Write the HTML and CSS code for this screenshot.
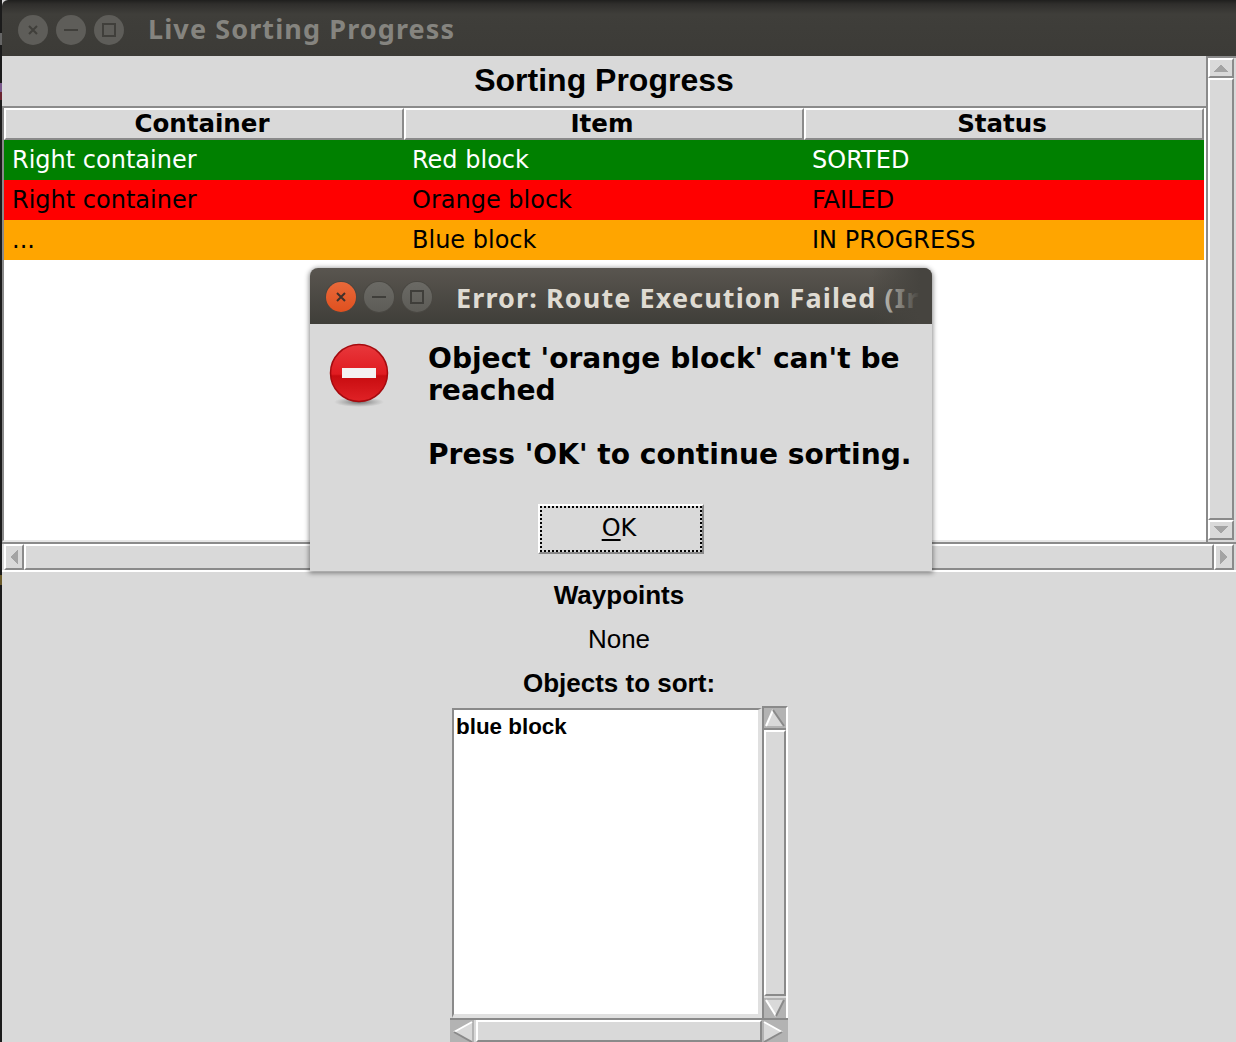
FILE: index.html
```
<!DOCTYPE html>
<html lang="en">
<head>
<meta charset="utf-8">
<title>Live Sorting Progress</title>
<link rel="stylesheet" href="styles.css">
</head>
<body>
<div class="window">
  <header class="titlebar">
    <span class="ctl ctl-faded"><svg viewBox="0 0 30 30"><path d="M11 11l8 8M19 11l-8 8"/></svg></span>
    <span class="ctl ctl-faded"><svg viewBox="0 0 30 30"><path d="M8 15h14"/></svg></span>
    <span class="ctl ctl-faded"><svg viewBox="0 0 30 30"><rect x="9" y="9" width="12" height="12"/></svg></span>
    <span class="wintitle wintitle-faded">Live Sorting Progress</span>
  </header>
  <section class="top">
    <div class="tablearea">
      <h1 class="heading">Sorting Progress</h1>
      <div class="tree">
        <div class="row">
          <div class="th">Container</div><div class="th">Item</div><div class="th">Status</div>
        </div>
        <div class="row row-green"><div class="td">Right container</div><div class="td">Red block</div><div class="td">SORTED</div></div>
        <div class="row row-red"><div class="td">Right container</div><div class="td">Orange block</div><div class="td">FAILED</div></div>
        <div class="row row-orange"><div class="td">...</div><div class="td">Blue block</div><div class="td">IN PROGRESS</div></div>
      </div>
    </div>
    <div class="vbar">
      <div class="raised btn-v"><svg class="arrow" width="14" height="8" viewBox="0 0 14 8"><polygon points="7,0 14,8 0,8"/></svg></div>
      <div class="raised thumb"></div>
      <div class="raised btn-v"><svg class="arrow" width="14" height="8" viewBox="0 0 14 8"><polygon points="0,0 14,0 7,8"/></svg></div>
    </div>
  </section>
  <div class="hbar">
    <div class="raised btn-h"><svg class="arrow" width="8" height="14" viewBox="0 0 8 14"><polygon points="8,0 8,14 0,7"/></svg></div>
    <div class="raised thumb"></div>
    <div class="raised btn-h"><svg class="arrow" width="8" height="14" viewBox="0 0 8 14"><polygon points="0,0 8,7 0,14"/></svg></div>
  </div>
  <section class="lower">
    <div class="label label-bold">Waypoints</div>
    <div class="label">None</div>
    <div class="label label-bold">Objects to sort:</div>
    <div class="listgroup">
      <div class="listbox">blue block</div>
      <div class="lvbar">
        <div class="lbtn lbtn-v"><svg width="22" height="20" viewBox="0 0 22 20"><polygon class="tri" points="9,2 20,18 2,18"/><path class="lit" d="M9 2L2 18"/><path class="shade" d="M9 2L20 18"/></svg></div>
        <div class="raised lthumb"></div>
        <div class="lbtn lbtn-v"><svg width="22" height="20" viewBox="0 0 22 20"><polygon class="tri" points="2,2 20,2 12,18"/><path class="lit" d="M2 2L12 18"/><path class="shade" d="M20 2L12 18"/></svg></div>
      </div>
      <div class="lhbar">
        <div class="lbtn lbtn-h"><svg width="24" height="22" viewBox="0 0 24 22"><polygon class="tri" points="4,12 22,2 22,22"/><path class="lit" d="M4 12L22 2"/><path class="shade" d="M4 12L22 22"/></svg></div>
        <div class="raised lhthumb"></div>
      </div>
      <div class="lbtn lbtn-corner"><svg width="24" height="22" viewBox="0 0 24 22"><polygon class="tri" points="2,2 20,12 2,22"/><path class="lit" d="M2 2L20 12"/><path class="shade" d="M20 12L2 22"/></svg></div>
    </div>
  </section>
</div>

<div class="dialog">
  <header class="dlgbar">
    <span class="ctl ctl-close"><svg viewBox="0 0 30 30"><path d="M11 11l8 8M19 11l-8 8"/></svg></span>
    <span class="ctl ctl-dlg"><svg viewBox="0 0 30 30"><path d="M8 15h14"/></svg></span>
    <span class="ctl ctl-dlg"><svg viewBox="0 0 30 30"><rect x="9" y="9" width="12" height="12"/></svg></span>
    <span class="wintitle wintitle-dlg">Error: Route Execution Failed (Ir</span>
  </header>
  <div class="dlgbody">
    <div class="dlgmain">
      <svg class="erricon" width="64" height="68" viewBox="0 0 64 68">
        <defs>
          <linearGradient id="redfill" x1="0" y1="0" x2="0" y2="1">
            <stop offset="0" stop-color="#e8383c"/>
            <stop offset="0.52" stop-color="#e01b20"/>
            <stop offset="0.55" stop-color="#c80c10"/>
            <stop offset="1" stop-color="#e02226"/>
          </linearGradient>
          <radialGradient id="iconshadow">
            <stop offset="0" stop-color="#555" stop-opacity="0.8"/>
            <stop offset="1" stop-color="#777" stop-opacity="0"/>
          </radialGradient>
        </defs>
        <ellipse cx="31" cy="60" rx="25" ry="5" fill="url(#iconshadow)"/>
        <circle cx="31" cy="31" r="28.5" fill="url(#redfill)" stroke="#a50a0e" stroke-width="1.5"/>
        <rect x="14" y="26" width="34" height="10" fill="#f4f2f2"/>
      </svg>
      <p class="message">Object 'orange block' can't be reached

Press 'OK' to continue sorting.</p>
    </div>
    <div class="btnrow"><button class="okbtn" type="button"><span class="focus"><span class="ul">O</span>K</span></button></div>
  </div>
</div>
</body>
</html>
```
FILE: styles.css
```
* { box-sizing: border-box; }
html, body { margin: 0; padding: 0; height: 100%; overflow: hidden; }
body {
  background: linear-gradient(#1b1b1b 0 33px, #666 33px 45px, #1b1b1b 45px 83px, #7a5a8c 83px 92px, #6a2530 92px 100px, #1b1b1b 100px 575px, #6a5a2a 575px 585px, #1b1b1b 585px);
  position: relative;
  font-family: "DejaVu Sans", sans-serif;
}
svg { display: block; }

.window { margin-left: 2px; height: 1042px; background: #d9d9d9; display: flex; flex-direction: column; }

.titlebar {
  height: 56px; flex: none; display: flex; align-items: center; padding: 4px 0 0 16px; gap: 8px;
  background: linear-gradient(#1f1f1e 0, #2f2e2c 4px, #3f3e3a 14px, #3c3b37 100%);
  border-top-left-radius: 6px;
}
.dlgbar {
  height: 56px; flex: none; display: flex; align-items: center; padding: 2px 0 0 16px; gap: 8px;
  background: linear-gradient(#59554f, #3f3e39);
  border-radius: 8px 8px 0 0; overflow: hidden; position: relative;
}
.dlgbar::after {
  content: ""; position: absolute; right: 0; top: 0; bottom: 0; width: 60px;
  background: linear-gradient(90deg, rgba(70,68,63,0), #46443f 80%);
}
.ctl { width: 30px; height: 30px; border-radius: 50%; flex: none; }
.ctl svg { width: 30px; height: 30px; fill: none; stroke-width: 2; }
.ctl-faded { background: #5e5d59; }
.ctl-faded svg { stroke: #403f3b; }
.ctl-close { background: linear-gradient(#e8693a, #e0501f); box-shadow: 0 0 0 1px #4a4640; }
.ctl-close svg { stroke: #40302a; }
.ctl-dlg { background: linear-gradient(#6b6a65, #5d5c57); box-shadow: 0 0 0 1px #4a4843; }
.ctl-dlg svg { stroke: #3f3e3a; }

.wintitle { font-family: "Noto Sans", sans-serif; font-weight: 700; font-size: 27px; letter-spacing: 1.1px; margin-left: 16px; white-space: nowrap; }
.wintitle-faded { color: #85847f; padding-bottom: 4px; }
.wintitle-dlg { color: #dfdbd2; }

.top { height: 486px; flex: none; display: flex; }
.tablearea { width: 1204px; flex: none; display: flex; flex-direction: column; }
.heading { margin: 0; height: 50px; flex: none; display: flex; align-items: center; justify-content: center; font-family: "Liberation Sans", sans-serif; font-weight: 700; font-size: 32px; color: #000; padding-bottom: 1px; }
.tree { flex: 1; background: #fff; border: 2px solid #8a8a8a; border-bottom-color: #e6e6e6; border-right: 0; padding-right: 2px; }
.row { display: grid; grid-template-columns: repeat(3, 400px); }
.th { height: 32px; background: #d9d9d9; border: 2px solid; border-color: #fff #8a8a8a #8a8a8a #fff; display: flex; align-items: center; justify-content: center; font-weight: 700; font-size: 24.5px; color: #000; padding: 0 4px 2px 0; }
.td { height: 40px; display: flex; align-items: center; padding: 0 0 1px 8px; font-size: 24px; }
.row-green { background: #008000; color: #fff; }
.row-red { background: #ff0000; color: #000; }
.row-orange { background: #ffa500; color: #000; }

.raised { background: #d9d9d9; border: 2px solid; border-color: #fff #8a8a8a #8a8a8a #fff; }
.arrow { fill: #a4a4a4; shape-rendering: crispEdges; }

.vbar { flex: 1; display: flex; flex-direction: column; border-left: 2px solid #8a8a8a; border-top: 2px solid #8a8a8a; padding-right: 2px; }
.btn-v { height: 20px; flex: none; display: flex; align-items: center; justify-content: center; }
.vbar .thumb { flex: none; height: 442px; }

.hbar { height: 30px; flex: none; display: flex; border-top: 2px solid #8a8a8a; border-bottom: 2px solid #fff; padding: 0 2px; }
.btn-h { width: 20px; flex: none; display: flex; align-items: center; justify-content: center; }
.hbar .thumb { flex: 1; }

.lower { flex: 1; display: flex; flex-direction: column; align-items: center; padding-top: 1px; min-height: 0; }
.label { height: 44px; flex: none; display: flex; align-items: center; font-family: "Liberation Sans", sans-serif; font-size: 26px; color: #000; }
.label-bold { font-weight: 700; }

.listgroup { width: 338px; margin-top: 1px; display: grid; grid-template-columns: 312px 26px; grid-template-rows: 312px 24px; flex: none; }
.listbox { margin: 2px 0 0 2px; background: #fff; border-style: solid; border-width: 2px 4px 4px 2px; border-color: #8a8a8a #e0e0e0 #e0e0e0 #8a8a8a; font-family: "Liberation Sans", sans-serif; font-weight: 700; font-size: 22.4px; padding: 2px 0 0 2px; line-height: 30px; color: #000; }
.lvbar { border-top: 2px solid #8a8a8a; border-left: 2px solid #8a8a8a; border-right: 2px solid #fff; display: flex; flex-direction: column; }
.lthumb { flex: 1; margin-top: 2px; margin-bottom: 2px; border-top-color: #fff; }
.lbtn { background: #b3b3b3; flex: none; }
.lbtn-v { height: 20px; border-bottom: 0; }
.lvbar .lbtn-v:first-child { box-shadow: 0 2px 0 #8a8a8a; }
.lhbar { border-top: 2px solid #8a8a8a; display: flex; }
.lbtn-h { width: 24px; height: 22px; }
.lhthumb { flex: 1; margin-left: 2px; height: 22px; }
.lbtn-corner { border-top: 2px solid #8a8a8a; height: 24px; }
.tri { fill: #d9d9d9; }
.lit { stroke: #fff; stroke-width: 2; fill: none; }
.shade { stroke: #8a8a8a; stroke-width: 2; fill: none; }

.dialog { position: absolute; left: 310px; top: 268px; width: 622px; height: 303px; background: #d9d9d9; border-radius: 8px 8px 0 0; box-shadow: 0 1px 5px 1px rgba(0,0,0,0.45); display: flex; flex-direction: column; }
.dlgbody { flex: 1; display: flex; flex-direction: column; }
.dlgmain { display: flex; align-items: flex-start; padding: 19px 0 0 18px; }
.erricon { margin-top: -1px; flex: none; }
.message { margin: 0 0 0 36px; white-space: pre-line; font-weight: 700; font-size: 28.1px; line-height: 32px; color: #000; }
.btnrow { display: flex; justify-content: center; margin-top: 33px; }
.okbtn { width: 166px; height: 50px; padding: 0; background: #d9d9d9; border: 2px solid; border-color: #fff #8a8a8a #8a8a8a #fff; font-family: "DejaVu Sans", sans-serif; font-size: 24px; color: #000; display: block; }
.focus {
  display: flex; width: 100%; height: 100%; align-items: center; justify-content: center; padding: 0 4px 2px 0;
  background-image: repeating-linear-gradient(90deg, #000 0 2px, transparent 2px 4px), repeating-linear-gradient(90deg, #000 0 2px, transparent 2px 4px), repeating-linear-gradient(0deg, #000 0 2px, transparent 2px 4px), repeating-linear-gradient(0deg, #000 0 2px, transparent 2px 4px);
  background-size: 100% 2px, 100% 2px, 2px 100%, 2px 100%;
  background-position: 0 0, 0 100%, 0 0, 100% 0;
  background-repeat: no-repeat;
}
.ul { text-decoration: underline; text-underline-offset: 3px; text-decoration-thickness: 2px; }
```
